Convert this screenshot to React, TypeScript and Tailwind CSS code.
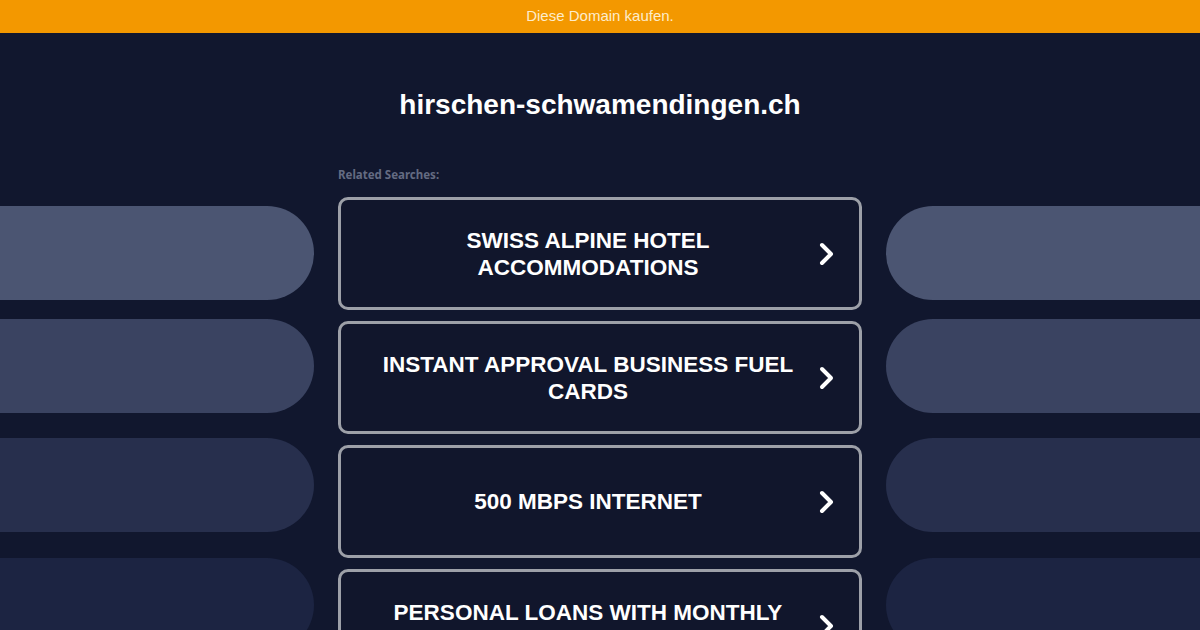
import React from 'react';

const searches = [
  'Swiss Alpine Hotel Accommodations',
  'Instant Approval Business Fuel Cards',
  '500 Mbps Internet',
  'Personal Loans With Monthly Payments',
];

const pillColors = ['bg-[#4b5572]', 'bg-[#3a4361]', 'bg-[#272f4d]', 'bg-[#1c2442]'];
const pillGaps = ['mt-0', 'mt-[19px]', 'mt-[25px]', 'mt-[26px]'];

const Chevron: React.FC = () => (
  <svg className="w-[22px] h-[26px] shrink-0" viewBox="0 0 22 26" fill="none">
    <path d="M7 4l9 9-9 9" stroke="white" strokeWidth={4} strokeLinecap="round" strokeLinejoin="round" />
  </svg>
);

const PillColumn: React.FC<{ side: 'left' | 'right' }> = ({ side }) => (
  <div className="w-[314px] shrink-0 flex flex-col pt-[42px]">
    {pillColors.map((c, i) => (
      <div
        key={i}
        className={`${pillGaps[i]} h-[94px] ${c} ${side === 'left' ? 'rounded-r-full' : 'rounded-l-full'}`}
      />
    ))}
  </div>
);

const App: React.FC = () => {
  return (
    <div className="w-[1200px] h-[630px] overflow-hidden bg-[#11172e] font-['Liberation_Sans',Arial,sans-serif]">
      <div className="h-[33px] bg-[#f39800] flex items-center justify-center text-[15px] text-[#fdeccb]">
        Diese Domain kaufen.
      </div>

      <h1 className="mt-[55px] text-center text-[28px] leading-[34px] font-bold text-white">
        hirschen-schwamendingen.ch
      </h1>

      <div className="mt-[42px] flex gap-6">
        <PillColumn side="left" />

        <div className="w-[524px] shrink-0">
          <div className="h-[22px] text-[11.5px] leading-[22px] font-bold text-[#646b82] font-['Noto_Sans',sans-serif]">
            Related Searches:
          </div>
          <div className="mt-[11px] flex flex-col gap-[11px]">
            {searches.map((s) => (
              <div
                key={s}
                className="h-[113px] border-[3px] border-[#9da0a8] rounded-[10px] bg-[#11162c] flex items-center pl-5 pr-[22px]"
              >
                <div className="flex-1 text-center text-[22.5px] leading-[27px] font-bold uppercase text-white">
                  {s}
                </div>
                <Chevron />
              </div>
            ))}
          </div>
        </div>

        <PillColumn side="right" />
      </div>
    </div>
  );
};

export default App;
